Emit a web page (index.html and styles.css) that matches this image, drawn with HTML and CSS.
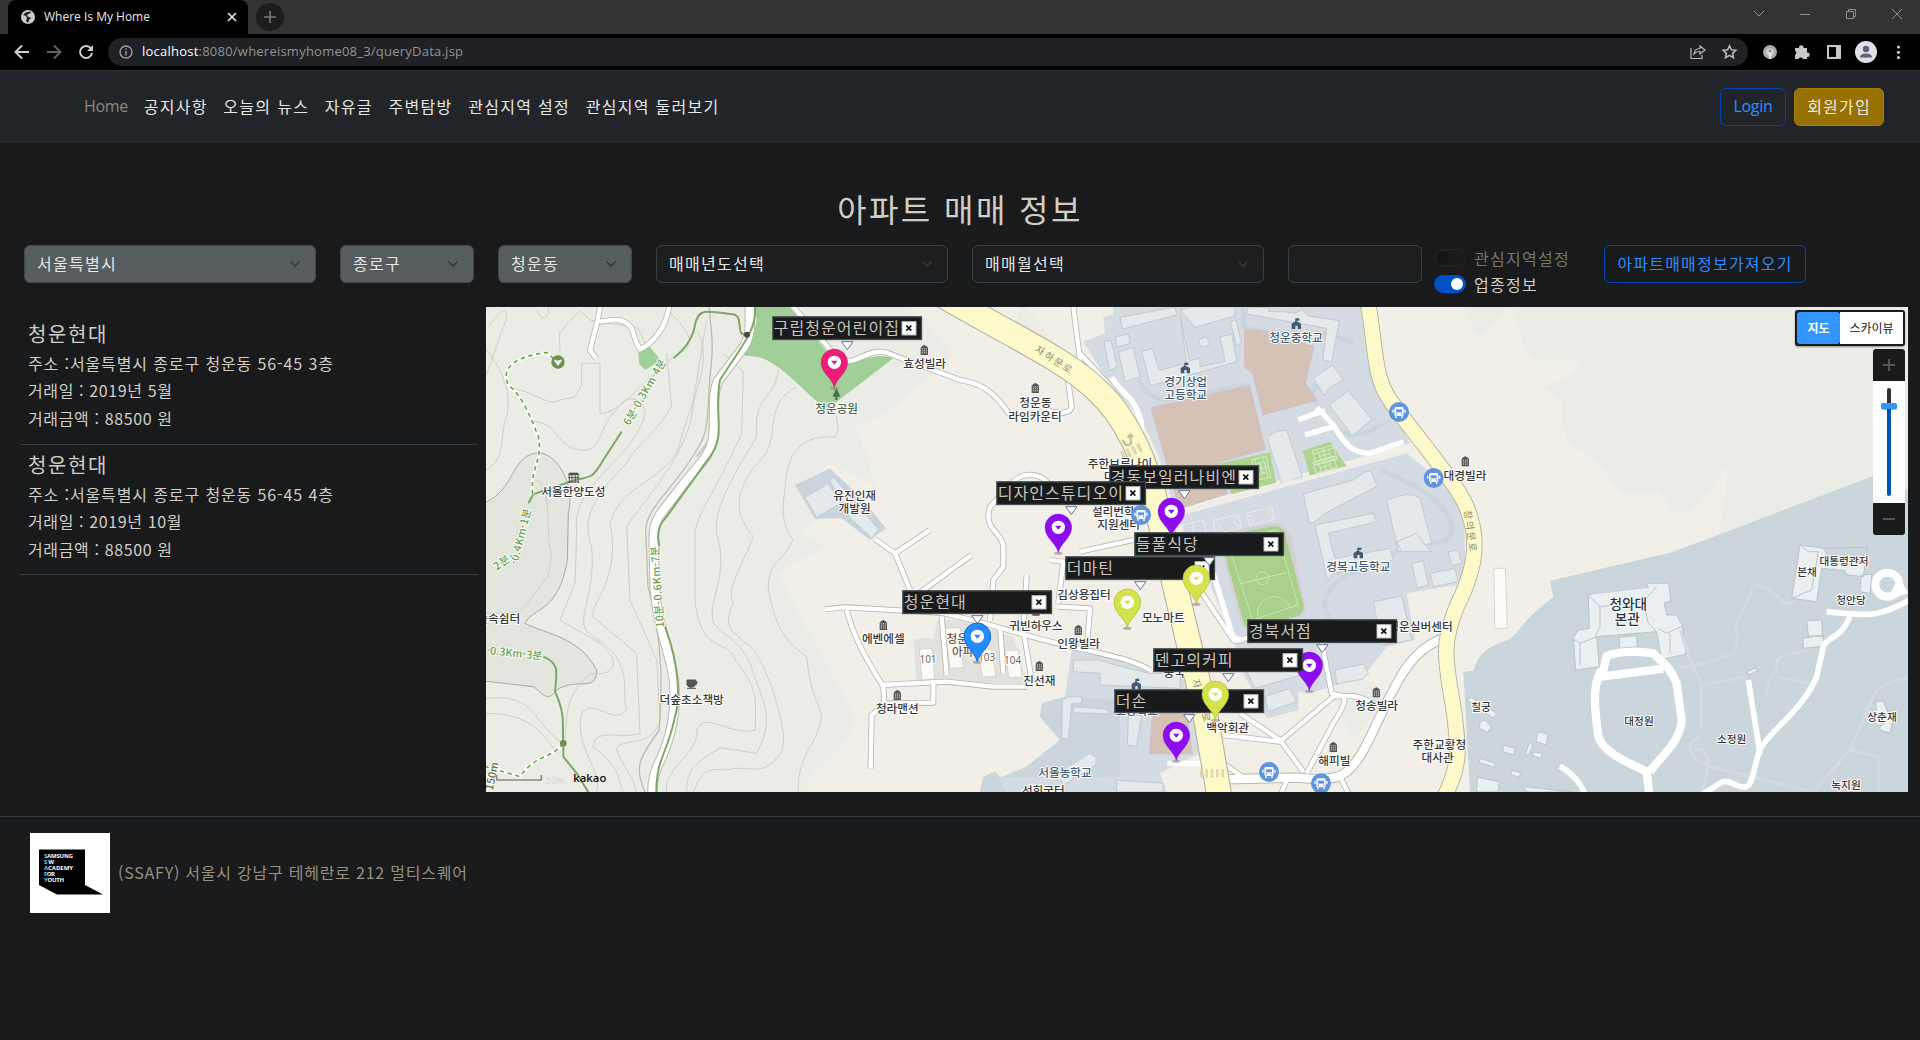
FILE: index.html
```html
<!DOCTYPE html>
<html lang="ko">
<head>
<meta charset="utf-8">
<title>Where Is My Home</title>
<link rel="stylesheet" href="styles.css">
</head>
<body>
<header class="browser">
  <div class="tabs">
    <div class="tab">
      <svg width="14" height="14" viewBox="0 0 14 14"><circle cx="7" cy="7" r="7" fill="#c9cacc"/><path d="M2 5l3 1 1 2-1 3 2 2 1-3 2-2-2-1-2-1 1-2 3-1-1-1.500-3 .5-2 1z" fill="#222"/></svg>
      <span class="tab-title">Where Is My Home</span>
      <svg class="tab-close" width="10" height="10" viewBox="0 0 10 10"><path d="M1 1l8 8M9 1l-8 8" stroke="#e6e6e6" stroke-width="1.7"/></svg>
    </div>
    <div class="new-tab"><svg width="12" height="12" viewBox="0 0 12 12"><path d="M6 0v12M0 6h12" stroke="#777" stroke-width="1.600"/></svg></div>
    <svg class="window-controls" width="150" height="12" viewBox="0 0 150 12" fill="none" stroke="#8d8d8d"><path d="M1 3l5 5 5-5M47 6.500h10M93.500 3.500h7v7h-7zM95.500 3.500v-2h7v7h-2M139 1l10 10M149 1l-10 10"/></svg>
  </div>
  <div class="toolbar">
    <svg class="history" width="80" height="16" viewBox="0 0 80 16" fill="none" stroke-width="2"><path d="M15 8H2M8 1.500L1.500 8 8 14.500" stroke="#d0d0d0"/><path d="M33 8h13M40 1.500L46.500 8 40 14.500" stroke="#636363"/><path d="M77 4.500A6 6 0 1 0 78 9" stroke="#d0d0d0"/><path d="M79 1v6h-6z" fill="#d0d0d0"/></svg>
    <div class="address">
      <svg width="14" height="14" viewBox="0 0 14 14" fill="none" stroke="#9a9da1" stroke-width="1.400"><circle cx="7" cy="7" r="6"/><path d="M7 6v4.500M7 3.300v1.500"/></svg>
      <span class="url"><b>localhost</b>:8080/whereismyhome08_3/queryData.jsp</span>
      <svg width="48" height="16" viewBox="0 0 48 16" fill="none" stroke="#b8b8b8" stroke-width="1.200"><path d="M1 4v10.500h11V11M4 10c.5-4 3-5.500 6-5.500V2l5 4-5 4V7.500C7.500 7.500 5.500 8 4 10z"/><path d="M39.500 1.800l1.900 4 4.400.5-3.200 3 .8 4.300-3.900-2.200-3.900 2.200.8-4.300-3.200-3 4.400-.5z" stroke-width="1.600"/></svg>
    </div>
    <svg class="extensions" width="144" height="24" viewBox="0 0 144 24"><circle cx="10" cy="12" r="7" fill="#aaa"/><circle cx="10" cy="12" r="4" fill="#ccc"/><path d="M8.500 12h3l-.5 7H9z" fill="#e4e4e4"/><circle cx="10" cy="11" r="1.300" fill="#888"/><path d="M35 8h4a2.300 2.300 0 1 1 4.500 0H47v4.500a2.200 2.200 0 1 1 0 4.300V19h-4a2.500 2.500 0 0 0-4.500 0H35v-4a2.400 2.400 0 0 0 0-4.300z" fill="#c7c7c7"/><path d="M68 6h12v12H68z" fill="none" stroke="#c7c7c7" stroke-width="2"/><path d="M76 6h4v12h-4z" fill="#c7c7c7"/><circle cx="106" cy="12" r="11" fill="#dee1e6"/><circle cx="106" cy="9" r="3.200" fill="#5a6478"/><path d="M100 17.500c0-3.500 4-4 6-4s6 .5 6 4z" fill="#5a6478"/><g fill="#c7c7c7"><circle cx="138.500" cy="7" r="1.600"/><circle cx="138.500" cy="12.300" r="1.600"/><circle cx="138.500" cy="17.600" r="1.600"/></g></svg>
  </div>
</header>

<nav class="navbar">
  <a class="home">Home</a><a>공지사항</a><a>오늘의 뉴스</a><a>자유글</a><a>주변탐방</a><a>관심지역 설정</a><a>관심지역 둘러보기</a>
  <div class="account"><button class="btn outline login">Login</button><button class="btn join">회원가입</button></div>
</nav>

<h1>아파트 매매 정보</h1>

<form class="filters">
  <div class="select wide filled">서울특별시<svg width="12" height="8" viewBox="0 0 12 8"><path d="M1.500 1.500L6 6l4.500-4.500"/></svg></div>
  <div class="select filled">종로구<svg width="12" height="8" viewBox="0 0 12 8"><path d="M1.500 1.500L6 6l4.500-4.500"/></svg></div>
  <div class="select filled">청운동<svg width="12" height="8" viewBox="0 0 12 8"><path d="M1.500 1.500L6 6l4.500-4.500"/></svg></div>
  <div class="select wide">매매년도선택<svg width="12" height="8" viewBox="0 0 12 8"><path d="M1.500 1.500L6 6l4.500-4.500"/></svg></div>
  <div class="select wide">매매월선택<svg width="12" height="8" viewBox="0 0 12 8"><path d="M1.500 1.500L6 6l4.500-4.500"/></svg></div>
  <div class="select"></div>
  <div class="switches">
    <label class="off"><i></i>관심지역설정</label>
    <label class="on"><i></i>업종정보</label>
  </div>
  <button type="button" class="btn outline fetch">아파트매매정보가져오기</button>
</form>

<main class="content">
  <section class="list">
    <article><h2>청운현대</h2><p class="addr">주소 :서울특별시 종로구 청운동 56-45 3층</p><p>거래일 : 2019년 5월</p><p>거래금액 : 88500 원</p></article>
    <article><h2>청운현대</h2><p class="addr">주소 :서울특별시 종로구 청운동 56-45 4층</p><p>거래일 : 2019년 10월</p><p>거래금액 : 88500 원</p></article>
  </section>

  <section class="map">
  <svg class="map-canvas" width="1422" height="485" viewBox="18 21 4266 1455">
    <defs>
      <g id="pin"><ellipse cx="0" cy="78" rx="13" ry="5" fill="#8a8a80" opacity=".6" stroke="none"/><path d="M0 76C-6 48-40 32-40 0A40 40 0 0 1 40 0C40 32 6 48 0 76z"/><circle r="20" fill="#fff" stroke="none"/><path d="M-10-5h20L0 7z" stroke="none"/></g>
      <g id="box"><path d="M208 76h34l-17 24z" fill="#fff" stroke="#66749b" stroke-width="3"/><rect x="1.500" y="1.500" width="446" height="68" fill="#181a1b" stroke="#454a4d" stroke-width="4"/></g>
      <g id="x"><rect x="389" y="16" width="42" height="40" fill="#fff" stroke="#bbb" stroke-width="3"/><path d="M402 28l15 15m0-15l-15 15" stroke="#111" stroke-width="5"/></g>
      <g id="bus"><circle r="30" fill="#5f94df" stroke="none"/><rect x="-14" y="-15" width="28" height="27" rx="5" fill="#fff"/><path d="M-9-8H9V1H-9z" fill="#5f94df"/><path d="M-18-7v9M18-7v9M-9 12v6M9 12v6" stroke="#fff" stroke-width="4"/><circle cx="-8" cy="6" r="2.500" fill="#5f94df"/><circle cx="8" cy="6" r="2.500" fill="#5f94df"/></g>
      <g id="apt"><path d="M-11 15v-22l5-5 6-3 6 3 5 5v22z" fill="#555"/><path d="M-6-5v15M0-5v15M6-5v15" stroke="#eee" stroke-width="3" stroke-dasharray="3 3"/></g>
      <g id="school"><path d="M-14 16V0L-3-7v-9h12v7h-8v2L14 0v16H4V6h-7v10z" fill="#435a70"/></g>
      <g id="court"><path d="M-32-22h64v44h-64zM-32-13h64M-32 13h64M0-22v44M-16-13v26M16-13v26M-16 0h32"/></g>
      <!-- streets, grouped by width -->
      <g id="wide">
        <path d="M808 10C812 80 810 110 792 140L716 240C694 280 706 340 700 410C690 470 660 490 620 540L550 630C520 670 522 690 521 720L524 860C530 970 565 1040 582 1140C590 1250 570 1310 546 1370C524 1410 516 1440 517 1490"/>
        <path d="M2900 1010C2820 1040 2780 1090 2740 1170C2680 1280 2655 1370 2600 1415C2570 1440 2520 1440 2450 1433L2230 1438"/>
      </g>
      <g id="mid">
        <path d="M940 21L1060 160C1120 220 1150 140 1220 158L1440 240C1500 250 1540 270 1590 345"/>
        <path d="M1780 21L1800 180L1760 210L1775 320C1770 340 1740 345 1700 330"/>
        <path d="M1800 160L1900 270" />
        <path d="M1035 928L1095 922L1380 938C1500 960 1700 1030 1820 1050C1900 1070 1960 1080 2010 1110"/>
        <path d="M1100 930C1120 1010 1160 1080 1210 1160L1213 1215L1175 1245L1172 1405"/>
        <path d="M1205 1155L1400 1145L1540 1160L1640 1160"/>
        <path d="M1215 1210L1360 1208V1150M1385 950L1400 1125M1185 718L1245 760L1290 870M1245 760L1350 690M1290 900L1440 790M1440 790L1475 765"/>
        <path d="M1530 960L1540 840L1570 800V735C1560 690 1510 690 1530 620C1580 570 1600 530 1640 525C1690 520 1710 555 1720 570M1800 755L1960 720M1640 825L1630 990L1655 1140M1710 780L1750 785L1735 910M1735 920L1830 925L1820 1045M1560 980L1570 1120"/>
        <path d="M2160 870L2260 1020C2270 1030 2290 1015 2310 1010M2520 1000L2555 1180C2600 1190 2610 1190 2560 1270L2480 1420M2560 1190C2640 1180 2660 1200 2700 1220M2560 1190L2400 1325L2230 1305M2280 1240L2400 1320L2470 1415M2230 1390L2300 1440M2420 1440L2400 1490M2580 1430L2610 1490"/>
        <path d="M360 21L352 65L330 150L348 175M358 65C400 60 430 50 455 85L470 130L480 148C520 130 560 80 568 15"/>
      </g>
      <g id="yellow">
        <path d="M1360 -30C1580 100 1760 180 1850 270C1930 340 2000 480 2030 620L2090 880L2170 1210L2220 1500"/>
      </g>
      <g id="yellow2"><path d="M2664 10C2688 140 2680 230 2730 300C2800 400 2900 510 2950 600C3010 720 2980 820 2930 920C2890 1020 2890 1060 2920 1220C2940 1370 2940 1390 2890 1500"/></g>
      <g id="garden">
        <path d="M3365 1110C3340 1150 3340 1200 3355 1310C3370 1360 3450 1390 3500 1415L3510 1500M3510 1415C3540 1370 3600 1330 3605 1260L3590 1150C3570 1100 3550 1090 3520 1060C3490 1055 3420 1050 3380 1068L3365 1130L3550 1106"/>
      </g>
      <g id="garden-path">
        <path d="M3240 1398C3290 1430 3310 1460 3320 1500M3805 1140L3840 1360M4040 935C4170 950 4200 950 4290 900M4110 950C4080 1020 4040 1010 4030 1040L4010 1130C3970 1230 3860 1300 3840 1350C3820 1400 3820 1450 3800 1460C3770 1470 3750 1430 3720 1450L3640 1500"/>
      </g>
    </defs>

    <rect x="18" y="21" width="4266" height="1455" fill="#f2efe9"/>
    <!-- hills -->
    <path fill="#ebece6" d="M18 21H1290L1420 150C1410 200 1380 220 1330 240C1270 290 1240 350 1120 380C1170 470 1170 510 1190 560L1060 490L950 550L1010 650L960 700L1030 740L890 820C930 860 930 900 960 950L1020 1050C1070 1170 1110 1200 1120 1270C1100 1350 1020 1390 985 1440V1476H18z"/>
    <path fill="#ebece6" d="M1620 21H1640L1730 140L1720 160L1600 90zM2550 1170C2620 1120 2680 1130 2720 1190L2620 1320z"/>
    <path fill="#ebece6" d="M2950 21L2990 105C3020 115 3040 60 3090 30C3130 20 3110 190 3180 178C3310 172 3350 190 3195 265C3280 310 3230 320 3260 420C3290 470 3340 440 3400 550C3450 610 3490 570 3530 575C3560 580 3570 650 3610 640C3690 620 3720 500 3740 502C3745 520 3735 580 3715 730L4284 730V21z"/>
    <path fill="#e4e5df" stroke="#aaa9a3" stroke-width="3" d="M10 610C110 570 90 460 180 458C240 470 285 560 265 640L262 780C235 940 160 920 135 970C190 1000 300 1010 350 1110C350 1180 290 1130 230 1170C200 1210 190 1180 160 1160L10 1143z"/>
    <g class="contour">
      <path d="M25 80C80 0 90 40 70 80L18 230M170 30C200 90 210 20 205 21M18 510C80 480 60 390 80 350C100 260 50 190 20 150M240 155L238 100L300 30L330 60L475 85L500 140M80 260C180 280 200 320 240 300L285 290L305 255V190H360V340C420 350 520 200 600 160C670 120 590 70 560 21"/>
      <path d="M150 365C240 360 220 440 300 450C370 460 350 380 410 330C440 270 500 300 495 350C440 500 270 550 290 700L285 850L240 960L360 1030C430 1090 400 1130 330 1120C240 1200 270 1260 250 1330"/>
      <path d="M560 160L575 320C530 400 470 430 440 490C350 580 300 650 335 740C350 900 270 970 340 1010C470 1090 420 1170 440 1230C400 1280 340 1190 305 1240C280 1340 370 1410 350 1476"/>
      <path d="M650 90C710 180 620 330 600 430C570 540 420 550 390 670C430 860 300 930 350 960L470 1060L480 1300C430 1320 340 1280 340 1340C430 1410 410 1440 430 1476"/>
      <path d="M680 60L640 300C640 450 490 600 440 680L450 900L530 1080L540 1260C520 1350 410 1310 410 1350C430 1400 460 1430 470 1476"/>
      <path d="M730 160L790 215L785 400C700 590 650 640 645 700V900C660 1060 740 1020 760 1070C830 1170 830 1170 825 1290C750 1310 680 1230 650 1290C660 1360 550 1400 560 1476"/>
      <path d="M895 210C880 310 820 280 830 410C770 510 700 620 710 700C750 830 680 900 700 970C750 1020 800 1040 820 1120C860 1230 880 1260 830 1360L720 1343C650 1390 620 1400 620 1476"/>
      <path d="M950 260C850 310 900 410 850 470C720 610 800 680 820 710C770 830 740 870 760 910C710 1010 800 1000 840 1080C890 1180 930 1330 900 1360C850 1440 800 1390 740 1410C670 1400 660 1430 640 1476"/>
      <path d="M1060 290L1075 390L1065 412C930 400 920 500 915 570C900 660 920 690 938 718C920 780 860 780 865 870C890 980 900 1010 980 1070C990 1160 1000 1180 1025 1240C1020 1330 950 1360 955 1476M140 540C230 520 190 700 215 760L205 830L120 935L18 940M18 1195C180 1180 150 1270 250 1330M18 1240C150 1240 190 1300 230 1360"/>
    </g>
    <g fill="none" stroke="#bdbdb8" stroke-width="4"><path d="M688 21C690 90 705 110 690 230C680 350 690 390 650 450C580 570 500 620 497 690L504 860C560 1060 540 1230 538 1290C480 1370 460 1400 495 1476M785 140L705 250C690 390 710 400 650 470"/></g>
    <path d="M820 21H930L1070 190C1120 200 1180 150 1240 175L1070 305L1035 325L1000 295C870 170 850 165 772 168C850 60 830 60 820 21zM475 155L505 135L542 180L495 210L478 192z" fill="#a0cf98"/>

    <!-- palace grounds -->
    <path fill="#cbd5dc" d="M2950 1116L2980 1112C3000 1040 3060 1030 3090 1018C3130 980 3130 960 3220 890L3210 842L3570 758L3700 710L4180 528L4284 570V1476H2970z"/>
    <!-- school grounds -->
    <g fill="#d4dbe2">
      <path d="M1870 50L1900 45V21H2645L2655 130L2690 240L2790 430L2080 630C2060 500 2000 350 1900 270L1810 125L1875 100z"/>
      <path d="M2090 650L2780 460L2950 600L2958 850L2780 880L2805 1020L2720 1040L2650 1130L2490 1180L2455 1175V1230L2360 1255L2290 1120L2260 1020L2180 830z"/>
      <path d="M1775 1050L1960 1090L2040 1140L2140 1130L2160 1360L2040 1420L2060 1476H1500L1510 1430L1545 1415L1565 1432L1640 1400L1740 1320L1680 1250L1685 1210L1755 1190z"/>
    </g>
    <path fill="#cbd5dc" d="M1680 1250L1685 1210L1755 1190L1920 1200V1430L1565 1432L1640 1400L1740 1320zM1500 1476L1510 1430L1545 1415L1580 1476z"/>
    <path d="M945 555L1050 505L1150 600L1218 685L1170 720L1085 655L1005 657z" fill="#c9d4dc"/>
    <g fill="none" stroke="#cbd5dc" stroke-width="14"><path d="M2290 21V80C2400 120 2500 70 2620 130M2530 225C2490 280 2480 270 2530 340C2600 440 2660 400 2710 370M1975 240C2020 310 2040 310 2180 280L2300 250M2560 970C2500 900 2550 830 2680 800C2730 770 2780 720 2880 730C2950 700 2930 600 2700 510"/></g>

    <!-- fields -->
    <g fill="#d5c2b5" stroke="#d1c1c2" stroke-width="6">
      <path d="M2295 90L2365 97L2500 140L2475 250L2508 300L2350 343L2320 220L2295 200z"/>
      <path d="M2015 325L2308 258L2354 447L2215 485L2240 580L2100 625z"/>
      <path d="M2020 1230L2120 1245L2135 1360H2010z"/>
    </g>
    <path fill="#afd491" d="M2222 490L2370 457L2388 548L2255 583zM2468 452L2550 425L2602 502L2492 535z"/>
    <g fill="none" stroke="#e2f2d1" stroke-width="2"><use href="#court" transform="translate(2534 465) rotate(-16)"/><use href="#court" transform="translate(2536 499) rotate(-16)"/><use href="#court" transform="translate(2344 505) rotate(76)"/></g>
    <path fill="#d6cfd5" d="M2170 700L2390 670Q2425 670 2440 735L2480 940L2320 1000Q2290 990 2280 960L2215 720z"/>
    <path fill="#a9d18b" d="M2220 710L2380 678Q2410 675 2418 710L2472 920Q2470 945 2445 950L2335 985Q2300 995 2290 965z"/>
    <g fill="none" stroke="#c9e8b3" stroke-width="3"><path d="M2240 720L2390 690L2454 915L2318 960zM2278 852L2420 818"/><circle cx="2347" cy="835" r="19"/><path d="M2335 955A44 44 0 0 1 2430 925"/></g>
    <g fill="none" stroke="#e8edf0" stroke-width="3"><path d="M2105 675l65-15 10 40-65 14zM2140 670v35M2200 660l75-15 10 40-78 15zM2202 665q35 8 8 28M2277 650q-35 15 5 30M2300 640l75-20 8 38-75 17zM2303 645q35 8 8 26M2378 627q-34 15 5 27"/></g>

    <!-- buildings -->
    <g class="building">
      <path d="M1920 52L2085 21L2090 45L1928 87zM2100 30L2130 21H2265V48L2145 82zM2100 45L2128 182L2160 175V200L2235 185L2220 110L2255 103L2272 185L2020 255L2010 255L1985 155L2017 145L2038 210L2120 190zM2155 120L2180 110L2190 135L2162 142zM2250 65L2268 60L2285 130L2270 137zM1872 125L1893 120L1912 200L1888 212zM1905 110L1945 102L1950 130L1910 142zM1915 155L1960 142L1980 230L1935 245zM2305 22H2365V35H2410L2445 40L2465 28L2485 48L2578 62L2555 185L2528 180L2540 85L2300 42z"/>
      <path d="M2500 235L2558 195L2590 240L2545 265L2535 288zM2548 315L2605 272L2675 358L2617 407zM2362 415Q2370 395 2420 390L2467 530L2405 552z"/>
      <path d="M2470 582L2620 540L2655 515L2672 515L2692 558L2535 640L2500 668H2487zM2505 675L2680 640L2690 665L2545 700L2565 775L2730 745L2740 780L2560 820L2542 840zM2720 600Q2790 570 2820 595L2855 730L2755 755z"/>
      <path d="M2750 725L2810 700L2835 735L2855 755L2765 755zM2795 790L2830 782L2845 855L2812 865zM2680 905L2765 888L2795 1020L2705 1035zM2850 820L2925 805L2935 845L2860 860zM2905 755L2935 750L2945 790L2915 797zM2300 1115L2380 1085L2475 1100L2480 1120L2325 1165zM2355 1190L2430 1165L2450 1205L2365 1235zM2565 1110L2650 1092L2665 1120L2650 1137L2570 1152z"/>
      <path d="M1780 1080L1855 1080L1945 1105L2010 1120L2100 1120V1165L1860 1155V1120L1780 1115zM1747 1200L1765 1190H1805V1210H1775L1765 1318L1745 1315zM1780 1220L1885 1228V1242L1780 1238zM1945 1250L1985 1245L1970 1340L1942 1335zM1730 1420L1830 1360L1848 1370V1395L1750 1455zM1910 1440L2050 1450V1476H1910z"/>
      <path d="M975 592L1045 550L1082 610L1010 652zM1048 540L1060 532L1196 688L1175 715L1112 655z"/>
    </g>
    <g fill="#e3e1dc"><path d="M1300 1020L1330 1015L1360 1015L1372 960L1440 960L1600 1010L1640 1150L1310 1145z"/></g>
    <g fill="#fbfaf7" stroke="#ccc9c1" stroke-width="2"><path d="M1318 1048l38-3 8 92-38 3zM1395 985l45-2 10 120-40 2zM1495 1050l40-2 12 80-40 3zM1575 1052l40-2 12 80-40 3zM3042 805h34l6 180h-38z"/></g>
    <g class="palace">
      <path d="M3325 885L3505 864L3500 850L3566 850L3573 903L3552 908L3560 945L3590 945L3607 975L3617 1063L3545 1078L3530 995L3350 1010L3358 1100L3287 1110L3280 1015L3295 990L3328 985z"/>
      <path d="M3325 885L3360 920L3490 905L3530 860M3360 920V980L3345 1010M3490 905L3505 970L3530 995M3280 1018L3300 1030L3350 1010M3300 1030V1095M3535 985L3560 1000L3607 978M3570 1000V1060M3417 1012L3470 1007L3472 1040L3420 1045z"/>
      <path d="M3960 735L4032 745L4163 742L4150 830L4102 825L4095 812L4025 805L4010 905L3935 895zM3960 735L3985 755H4015L3995 870L3935 895M4032 745L4045 775L4140 785L4163 742M4143 825L4175 823L4170 880L4140 875zM3980 962L4025 960L4028 1010L3985 1008zM3968 1015L4030 1005L4032 1038L3970 1045z"/>
      <path d="M4185 1205L4210 1202L4230 1255L4200 1280L4170 1258L4190 1230zM4200 1265L4240 1255L4230 1300L4200 1290zM3800 1115L3828 1103L3832 1113L3806 1126z"/>
      <path d="M2960 1200L2975 1192L3050 1240L3040 1255zM3000 1265L3015 1260L3035 1280L3022 1297L2998 1285zM3070 1335L3105 1345L3102 1365L3068 1355zM3000 1375L3045 1390L3044 1402L2998 1388zM3095 1410L3122 1418L3118 1432L3092 1424zM3175 1295L3205 1303L3198 1335L3168 1325zM3148 1330L3160 1333L3145 1368L3136 1362zM3160 1355L3187 1360L3183 1374L3158 1368zM2992 1432L3058 1445L3054 1476H2990zM3130 1460L3280 1476H3140z"/>
    </g>
    <g fill="none" stroke="#d3dbe2" stroke-width="9"><path d="M3600 990L3635 1090L3665 1155V1290M3660 1310C3600 1330 3640 1400 3690 1390M3640 1350C3690 1340 3690 1400 3680 1410L3670 1476M3665 1155L3800 1130M3690 1400L4000 1476L4110 1350L4180 1190C4200 1150 4230 1150 4284 1130M4110 1350L4195 1370V1476M3600 1105L3635 1095L3675 1090L3760 1060L3775 1020L3765 980L3820 860C3880 840 3900 940 3945 900M3860 1190C3860 1120 3900 1120 3890 1100C3880 1070 3930 1060 3990 1050M3890 1130L3990 1150"/></g>

    <use href="#garden" class="road" stroke="#fff" stroke-width="25"/><use href="#garden-path" class="road" stroke="#fff" stroke-width="17"/>
    <circle cx="4222" cy="854" r="36" fill="none" stroke="#fff" stroke-width="24"/><path d="M4255 830L4286 880L4220 900z" fill="#fff"/><circle cx="4225" cy="855" r="17" fill="#cbd5dc"/>
    <use href="#mid" class="road" stroke="#b9b8b2" stroke-width="18"/><use href="#wide" class="road" stroke="#b9b8b2" stroke-width="31"/>
    <use href="#mid" class="road" stroke="#fff" stroke-width="13"/><use href="#wide" class="road" stroke="#fff" stroke-width="25"/>
    <path class="road" stroke="#fff" stroke-width="16" d="M1895 232C1930 290 1960 280 1985 370V430M2510 322L2560 375C2600 440 2620 460 2670 460L2770 425M2505 342l30-10M2455 360l55-22M2475 405L2560 380M2200 820L2255 1000Q2265 1025 2290 1017M2062 1390h110"/>
    <path d="M2080 640L2800 450" stroke="#efede7" stroke-width="10"/>
    <use href="#yellow" class="road" stroke="#aeaea0" stroke-width="78"/><use href="#yellow" class="road" stroke="#fdf9c9" stroke-width="72"/>
    <use href="#yellow2" class="road" stroke="#aeaea0" stroke-width="49"/><use href="#yellow2" class="road" stroke="#fdf9c9" stroke-width="44"/>
    <path d="M2160 1420h78" stroke="#ded9b3" stroke-width="25" stroke-dasharray="8 8"/><path d="M1925 468l64-30" stroke="#ded9b3" stroke-width="28" stroke-dasharray="10 8"/><path d="M1928 420q10 25 25 10l-2-22m-8 4l8-8 8 7" fill="none" stroke="#c5c0a0" stroke-width="7"/>

    <!-- hiking trails -->
    <g fill="none" stroke="#7fa768" stroke-width="6"><path d="M800 104C760 110 800 40 750 42C670 30 660 30 647 65C640 120 610 150 580 175M425 395L370 480C340 530 340 530 285 540L160 583L145 610M825 21C830 90 790 130 720 240C700 350 740 400 690 470L560 650Q530 680 535 720L538 740M555 980C600 1100 600 1200 585 1250C560 1370 530 1370 529 1476M190 1070C240 1090 230 1120 225 1175C260 1250 245 1280 250 1330V1370L290 1420L325 1476"/></g>
    <g class="dashed"><path d="M158 583C150 500 190 480 175 410C155 360 130 290 85 255C60 200 110 170 200 157L220 175M250 1330C210 1380 170 1360 120 1430L18 1400" stroke="#fff" stroke-width="10"/><path d="M158 583C150 500 190 480 175 410C155 360 130 290 85 255C60 200 110 170 200 157L220 175M250 1330C210 1380 170 1360 120 1430L18 1400" stroke="#68a848" stroke-width="5" stroke-dasharray="13 11"/></g>
    <circle cx="801" cy="104" r="9" fill="#444"/><circle cx="234" cy="186" r="20" fill="#6f914e"/><path d="M223 180l11 16 11-16-11 4z" fill="#fff" stroke="#fff" stroke-width="3"/><circle cx="250" cy="1330" r="10" fill="#6f914e"/>

    <g class="trail-label">
      <text transform="translate(448 378) rotate(-60)" textLength="222">6분-0.3Km-4분</text>
      <text transform="translate(112 796) rotate(-76)" textLength="172">-0.4Km-1분</text>
      <text transform="translate(50 812) rotate(-35)" textLength="66">2분-</text>
      <text transform="translate(552 982) rotate(-94)" textLength="245">10분-0.6Km-7분</text>
      <text transform="translate(18 1062) rotate(6)" textLength="168">-0.3Km-3분</text>
      <text class="dark" transform="translate(38 1472) rotate(-78)">150m</text>
    </g>

    <g class="label">
      <text x="280" y="587">서울한양도성</text><text class="park" x="1070" y="338">청운공원</text><text x="1334" y="205">효성빌라</text>
      <text x="1124" y="600">유진인재</text><text x="1124" y="638">개발원</text><text x="-8" y="968" class="start">숲속쉼터</text>
      <text x="635" y="1211">더숲초소책방</text><text x="1210" y="1030">에벤에셀</text><text x="1252" y="1240">청라맨션</text>
      <text x="1666" y="320">청운동</text><text x="1665" y="362">라임카운티</text><text x="1920" y="505">주한브루나이</text><text x="1888" y="543">대</text>
      <text x="1900" y="647">설리번학</text><text x="1916" y="686">지원센터</text><text x="2955" y="540">대경빌라</text>
      <text x="1812" y="898">김상용집터</text><text x="2050" y="965">모노마트</text><text x="1668" y="989">귀빈하우스</text><text x="1796" y="1045">인왕빌라</text>
      <text x="1678" y="1154">진선재</text><text x="2083" y="1130">중국</text><text x="2243" y="1297">백악회관</text><text x="2690" y="1231">청송빌라</text><text x="2563" y="1396">해피빌</text>
      <text x="2725" y="992" class="start">청운실버센터</text><text x="2878" y="1348">주한교황청</text><text x="2873" y="1387">대사관</text>
      <g class="school"><text x="2448" y="125">청운중학교</text><text x="2117" y="258">경기상업</text><text x="2117" y="297">고등학교</text><text x="2635" y="812">경복고등학교</text><text x="1970" y="1244">고등학교</text><text x="1755" y="1431">서울농학교</text></g>
      <text x="1690" y="1484">선희궁터</text><text class="apt" x="1464" y="1029">청운현대</text><text class="apt" x="1464" y="1068">아파트</text>
      <g class="small"><text x="1344" y="1090">101</text><text x="1520" y="1082">103</text><text x="1598" y="1093">104</text></g>
      <g class="palace-name"><text x="3445" y="926">청와대</text><text x="3442" y="973">본관</text></g>
      <g class="garden-name"><text x="3981" y="829">본채</text><text x="4092" y="796">대통령관저</text><text x="4113" y="911">청안당</text><text x="3003" y="1234">칠궁</text><text x="3477" y="1276">대정원</text><text x="3755" y="1328">소정원</text><text x="4206" y="1262">상춘재</text><text x="4098" y="1466">녹지원</text></g>
    </g>
    <g class="street"><text transform="translate(1663 153) rotate(33)" textLength="125">자하문로</text><text transform="translate(2952 632) rotate(82)" textLength="125">창의문로</text><text transform="translate(2137 1140) rotate(75)" textLength="132">자하문로</text></g>

    <use href="#apt" x="1333" y="150"/><use href="#apt" x="1666" y="264"/><use href="#apt" x="2956" y="484"/><use href="#apt" x="1210" y="975"/><use href="#apt" x="1252" y="1185"/><use href="#apt" x="1795" y="990"/><use href="#apt" x="1678" y="1098"/><use href="#apt" x="2689" y="1177"/><use href="#apt" x="2560" y="1341"/><use href="#apt" x="1668" y="932"/>
    <use href="#school" x="2449" y="71"/><use href="#school" x="2116" y="204"/><use href="#school" x="2635" y="759"/><use href="#school" x="1969" y="1152"/>
    <path d="M263 526l5-8h26l5 8z" fill="#555"/><path d="M270 520h21M264 533h34M268 526v22M276 526v22M286 526v22M294 526v22M264 546h34" fill="none" stroke="#555" stroke-width="3"/>
    <path d="M621 1140h26v14q-5 8-13 8-10 0-13-8zM645 1143q12 0 2 12M621 1165h27" fill="#555" stroke="#555" stroke-width="3"/><path d="M1069 263l-11 27h8v10h6v-10h9z" fill="#506a50"/>
    <use href="#bus" x="2757" y="336"/><use href="#bus" x="2861" y="534"/><use href="#bus" x="1983" y="645"/><use href="#bus" x="2367" y="1416"/><use href="#bus" x="2523" y="1450"/>

    <!-- markers and their info windows -->
    <g class="purple"><use href="#pin" x="1735" y="682"/><use href="#pin" x="2074" y="634"/><use href="#pin" x="2488" y="1096"/></g>
    <use href="#pin" class="lime" x="1942" y="907"/>
    <g class="info" transform="translate(877 49)"><use href="#box"/><text x="4" y="54">구립청운어린이집</text><use href="#x"/></g>
    <g class="info" transform="translate(1888 496)"><use href="#box"/><text x="4" y="54">경동보일러나비엔</text><use href="#x"/></g>
    <g class="info" transform="translate(1549 544)"><use href="#box"/><text x="4" y="54">디자인스튜디오이</text><use href="#x"/></g>
    <g class="info" transform="translate(1756 769)"><use href="#box"/><text x="4" y="54">더마틴</text><use href="#x"/></g>
    <g class="info" transform="translate(1963 697)"><use href="#box"/><text x="4" y="54">들풀식당</text><use href="#x"/></g>
    <use href="#pin" class="lime" x="2149" y="835"/>
    <g class="info" transform="translate(1267 871)"><use href="#box"/><text x="4" y="54">청운현대</text><use href="#x"/></g>
    <g class="info" transform="translate(2302 958)"><use href="#box"/><text x="4" y="54">경북서점</text><use href="#x"/></g>
    <g class="info" transform="translate(2020 1045)"><use href="#box"/><text x="4" y="54">덴고의커피</text><use href="#x"/></g>
    <g class="info" transform="translate(1903 1168)"><use href="#box"/><text x="4" y="54">더손</text><use href="#x"/></g>
    <use href="#pin" class="pink" x="1063" y="187"/><use href="#pin" class="blue" x="1492" y="1009"/><use href="#pin" class="lime" x="2206" y="1183"/><use href="#pin" class="violet" x="2089" y="1306"/>

    <path d="M50 1425v15h134v-15" fill="none" stroke="#8f887b" stroke-width="5"/><text x="196" y="1452" font-size="27" font-weight="700" fill="#deddd6">50m</text><text x="280" y="1447" class="brand" textLength="99">kakao</text>
  </svg>
    <div class="map-type"><b>지도</b><span>스카이뷰</span></div>
    <div class="zoom">
      <div class="zoom-btn plus"></div>
      <div class="zoom-track"><i></i></div>
      <div class="zoom-btn"></div>
    </div>
  </section>
</main>

<footer>
  <svg class="logo" width="80" height="80" viewBox="0 0 80 80"><path fill="#fff" d="M0 0h80v80H0z"/><path d="M9 16.500h46V52l18 9.500H27L9 52z"/><g class="logo-text"><text x="14" y="25" textLength="29"><tspan>S</tspan>AMSUNG</text><text x="14" y="31" textLength="10"><tspan>S</tspan>W</text><text x="14" y="37" textLength="29"><tspan>A</tspan>CADEMY</text><text x="14" y="43" textLength="11"><tspan>F</tspan>OR</text><text x="14" y="49" textLength="20"><tspan>Y</tspan>OUTH</text></g></svg>
  <span>(SSAFY) 서울시 강남구 테헤란로 212 멀티스퀘어</span>
</footer>
</body>
</html>
```
FILE: styles.css
```css
* { box-sizing: border-box; }
body {
  margin: 0;
  height: 1040px;
  overflow: hidden;
  background: #181a1b;
  color: #d1cdc7;
  font: 16px/1.5 "Noto Sans CJK KR", sans-serif;
  letter-spacing: 1.3px;
}
h1, h2, p { margin: 0; font-weight: 400; }

/* browser frame */
.browser { height: 71px; background: #000; border-bottom: 1px solid #333; font-family: "Open Sans", "Noto Sans", sans-serif; letter-spacing: 0; }
.tabs { height: 34px; background: #333; display: flex; align-items: center; padding: 0 17px 0 8px; }
.tab { width: 240px; height: 34px; background: #000; border-radius: 8px 8px 0 0; display: flex; align-items: center; gap: 9px; padding: 0 11px 0 13px; }
.tab-title { color: #e8e8e8; font-size: 12px; flex: 1; }
.new-tab { width: 28px; height: 28px; margin-left: 8px; border-radius: 50%; background: #1d1d1d; display: flex; align-items: center; justify-content: center; }
.window-controls { margin-left: auto; margin-bottom: 6px; }
.toolbar { height: 36px; display: flex; align-items: center; }
.history { margin: 0 14px; }
.address { width: 1640px; height: 28px; border-radius: 14px; background: #202124; display: flex; align-items: center; gap: 9px; padding: 0 10px 0 11px; }
.url { flex: 1; font-size: 13px; letter-spacing: .23px; color: #909294; }
.url b { font-weight: 400; color: #fff; }
.extensions { margin-left: 12px; }

/* site navigation */
.navbar { height: 72px; background: #212529; display: flex; align-items: center; gap: 15.6px; padding: 0 36px 0 84px; color: #e8e6e3; }
.navbar a { letter-spacing: 1.3px; white-space: nowrap; padding-bottom: 2px; }
.navbar .home { color: #8d877c; font-family: "Open Sans"; letter-spacing: -.3px; }
.account { margin-left: auto; display: flex; gap: 8px; }
.btn { height: 38px; border: 1px solid #a87d00; border-radius: 6px; font: inherit; letter-spacing: 1.2px; padding: 0 0 2px; white-space: nowrap; }
.outline { background: transparent; color: #2b8cff; border-color: #0048ad; }
.login { width: 66px; font-family: "Open Sans"; letter-spacing: -.3px; }
.join { width: 90px; background: #967000; color: #f0ead8; }

h1 { height: 102px; padding-top: 41px; text-align: center; font-size: 32px; line-height: 48px; letter-spacing: 2.4px; }

/* search filters */
.filters { display: flex; align-items: flex-start; gap: 24px; padding: 0 24px; height: 62px; }
.select { width: 134px; height: 38px; border: 1px solid #393e40; border-radius: 6px; display: flex; align-items: center; justify-content: space-between; padding: 0 14px 2px 12px; color: #e8e6e3; background: #1c1e20; }
.select svg { fill: none; stroke: #35393c; stroke-width: 1.6; margin-top: 2px; }
.wide { width: 292px; }
.filled { background: #565d60; border-color: #42484b; }
.switches { width: 146px; margin: 0 0 0 -12px; }
.switches label { display: flex; align-items: center; gap: 8px; height: 26px; white-space: nowrap; }
.switches i { width: 32px; height: 18px; border-radius: 9px; border: 1px solid #242628; }
.switches i::after { content: ""; display: block; width: 12px; height: 12px; margin: 2px; border-radius: 50%; background: #131516; }
.off { color: #77736d; }
.on i { background: #0050c8; border-color: #0050c8; }
.on i::after { margin-left: 16px; background: #fff; }
.fetch { width: 202px; margin-left: 0; }

/* results and map */
.content { display: flex; height: 509px; padding-left: 20px; }
.list { width: 458px; margin-right: 8px; padding-top: 7px; }
.list article { height: 131px; border-bottom: 1px solid #393d3f; padding: 5px 9px 0 8px; }
.list article + article { height: 130px; }
.list h2 { font-size: 20px; line-height: 30px; letter-spacing: 1.6px; }
.list p { line-height: 27.300px; letter-spacing: .62px; }
.list h2 + p { padding-top: 1px; }
.list .addr { letter-spacing: .88px; }
.map { position: relative; width: 1422px; height: 485px; overflow: hidden; }
.map-canvas { display: block; letter-spacing: 0; }
.contour { fill: none; stroke: #cfcfca; stroke-width: 3; }
.road { fill: none; stroke-linejoin: round; }
.dashed { fill: none; }
.building { fill: #e4e9eb; stroke: #c3cacf; stroke-width: 3; }
.palace { fill: #eaeff2; stroke: #bbc4cb; stroke-width: 3; }
.label { font-size: 35px; font-weight: 500; text-anchor: middle; fill: #38383a; stroke: #fff; stroke-width: 6px; paint-order: stroke; stroke-linejoin: round; }
.start { text-anchor: start; }
.park { fill: #4c664b; }
.school { fill: #405a75; }
.apt, .small { fill: #6b5747; }
.small { font: 30px "Open Sans"; }
.palace-name { font-size: 41px; fill: #263545; }
.garden-name { font-size: 32px; }
.trail-label { font-size: 32px; font-weight: 500; fill: #6a9f50; stroke: #fff; stroke-width: 5px; paint-order: stroke; }
.dark { fill: #56704d; }
.street { font-size: 29px; fill: #8c8868; }
.info text { font-size: 48px; letter-spacing: 3.2px; fill: #c8c3bb; }
.pink { fill: #ed1e79; stroke: #c2185f; }
.purple, .violet { fill: #8e0cf0; stroke: #7807d0; }
.lime { fill: #d4e34b; stroke: #aaba31; stroke-width: 2px; }
.blue { fill: #238cff; stroke: #126bd1; stroke-width: 3px; }
.brand { font: 600 34px "Open Sans"; fill: #111; }
.map-type { position: absolute; top: 3px; right: 3px; width: 110px; height: 36px; padding: 2px; border-radius: 3px; background: #181a1b; display: flex; box-shadow: 0 1px 2px #0006; font-size: 12px; line-height: 31px; letter-spacing: 0; text-align: center; }
.map-type b { width: 43px; border-radius: 3px; background: #3396ff; color: #fff; }
.map-type span { flex: 1; background: #fff; color: #222; }
.zoom { position: absolute; top: 42px; right: 3px; width: 32px; height: 186px; border-radius: 3px; overflow: hidden; display: flex; flex-direction: column; }
.zoom-btn { height: 32px; background: linear-gradient(#555, #555) center / 12px 2px no-repeat #181a1b; }
.plus { background: linear-gradient(#555, #555) center / 12px 2px no-repeat, linear-gradient(#555, #555) center / 2px 12px no-repeat, #181a1b; }
.zoom-track { flex: 1; background: #fffffff0; display: flex; justify-content: center; padding: 7px 0; }
.zoom-track i { position: relative; width: 4px; background: linear-gradient(#333 18px, #0052b3 18px); border-radius: 2px; }
.zoom-track i::after { content: ""; position: absolute; left: -6px; top: 15px; width: 16px; height: 6px; border-radius: 2px; background: #3396ff; box-shadow: 0 1px 1px #0005; }

footer { height: 110px; border-top: 1px solid #393d3f; display: flex; align-items: center; gap: 8px; padding: 2px 30px 0; color: #988f81; letter-spacing: .77px; }
footer span { padding-bottom: 2px; }
.logo-text { font: 700 6px "Open Sans"; letter-spacing: 0; fill: #fff; }
.logo-text tspan { fill: #73cbea; }
```
